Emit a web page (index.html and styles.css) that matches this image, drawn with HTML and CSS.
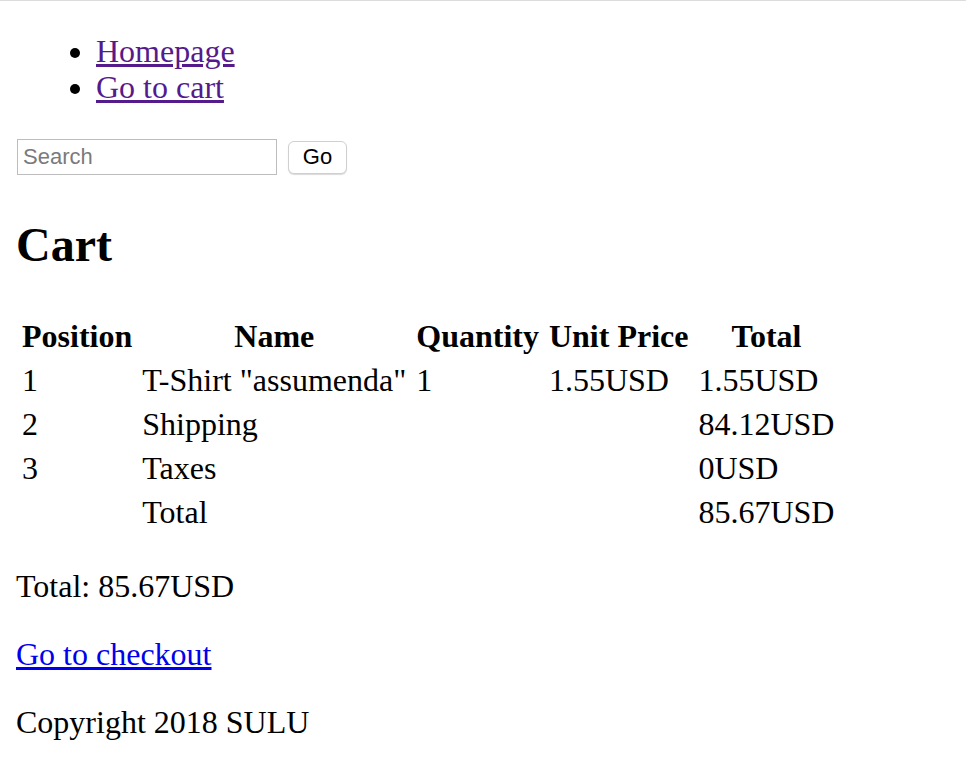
FILE: index.html
```html
<!DOCTYPE html>
<html lang="en">
<head>
<meta charset="utf-8">
<title>Cart</title>
<link rel="stylesheet" href="styles.css">
</head>
<body class="page">
<nav>
  <ul class="nav-list">
    <li><a class="visited" href="#">Homepage</a></li>
    <li><a class="visited" href="#">Go to cart</a></li>
  </ul>
</nav>
<form class="search">
  <input class="search-input" type="text" placeholder="Search">
  <button class="search-btn" type="button">Go</button>
</form>
<section class="cart">
  <h1 class="cart-title">Cart</h1>
  <table class="cart-table">
    <thead>
      <tr><th>Position</th><th>Name</th><th>Quantity</th><th>Unit Price</th><th>Total</th></tr>
    </thead>
    <tbody>
      <tr><td>1</td><td>T-Shirt "assumenda"</td><td>1</td><td>1.55USD</td><td>1.55USD</td></tr>
      <tr><td>2</td><td>Shipping</td><td></td><td></td><td>84.12USD</td></tr>
      <tr><td>3</td><td>Taxes</td><td></td><td></td><td>0USD</td></tr>
      <tr><td></td><td>Total</td><td></td><td></td><td>85.67USD</td></tr>
    </tbody>
  </table>
  <p class="para">Total: 85.67USD</p>
  <p class="para"><a class="link" href="#">Go to checkout</a></p>
</section>
<footer class="para">Copyright 2018 SULU</footer>
</body>
</html>
```

FILE: styles.css
```css
html {
  border-top: 1px solid #dcdcdc;
  background: #fff;
}
.page {
  margin: 0;
  padding: 16px;
  font-family: "Liberation Serif", "Times New Roman", serif;
  font-size: 32px;
  line-height: 36px;
  color: #000;
}
.nav-list {
  margin: 16px 0 32px;
  padding-left: 80px;
}
.visited {
  color: #551a8b;
}
.link {
  color: #0000ee;
}
.search {
  display: flex;
  align-items: center;
  height: 40px;
  margin: 0;
  gap: 11px;
}
.search-input {
  box-sizing: border-box;
  width: 260px;
  height: 36px;
  margin: 0 0 0 1px;
  padding: 0 5px;
  border: 1px solid #bdbdbd;
  font-family: "Liberation Sans", Arial, sans-serif;
  font-size: 22px;
  color: #000;
  outline: none;
}
.search-input::placeholder {
  color: #7a7a7a;
}
.search-btn {
  box-sizing: border-box;
  width: 59px;
  height: 33px;
  margin: 0;
  padding: 0;
  border: 1px solid #d0d0d0;
  border-radius: 6px;
  background: #fff;
  box-shadow: 0 1px 1px rgba(0,0,0,0.15);
  font-family: "Liberation Sans", Arial, sans-serif;
  font-size: 22px;
  color: #000;
}
.cart-title {
  font-size: 48px;
  line-height: 1.15;
  font-weight: bold;
  margin: 40px 0;
}
.cart-table {
  border-spacing: 4px;
  border-collapse: separate;
  margin: 0;
}
.cart-table th,
.cart-table td {
  padding: 2px 4px 2px 2px;
  line-height: 36px;
}
.cart-table th {
  text-align: center;
  font-weight: bold;
}
.cart-table td {
  text-align: left;
}
.para {
  margin: 32px 0;
  display: block;
}
```
